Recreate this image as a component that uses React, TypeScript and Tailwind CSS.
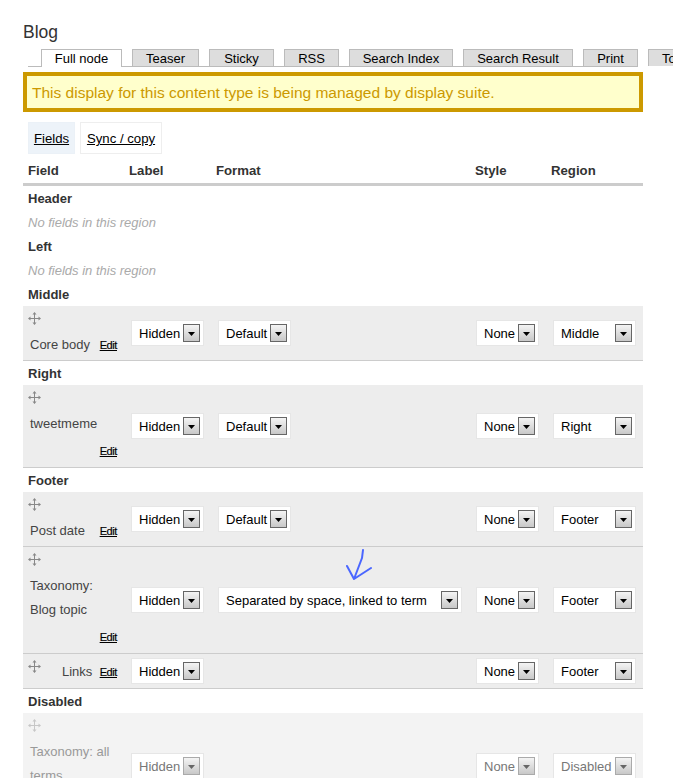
const FONT = "font-['Liberation_Sans',Arial,sans-serif]";

const TABS = [
  { label: 'Teaser', width: 'w-[67px]' },
  { label: 'Sticky', width: 'w-[65px]' },
  { label: 'RSS', width: 'w-[55px]' },
  { label: 'Search Index', width: 'w-[104px]' },
  { label: 'Search Result', width: 'w-[110px]' },
  { label: 'Print', width: 'w-[55px]' },
];

function DragIcon({ disabled }: { disabled?: boolean }) {
  return (
    <svg width="13" height="13" viewBox="0 0 13 13" className={disabled ? 'block shrink-0 opacity-40' : 'block shrink-0'}>
      <path d="M6.5 1.5v10M1.5 6.5h10" stroke="#888" strokeWidth="1" fill="none" />
      <path d="M6.5 0l2 2.5h-4zM6.5 13l2-2.5h-4zM0 6.5l2.5-2v4zM13 6.5l-2.5-2v4z" fill="#888" />
    </svg>
  );
}

function Select({ value, width, disabled }: { value: string; width: string; disabled?: boolean }) {
  return (
    <div className={`flex h-[26px] items-center justify-between border border-[#e6e6e6] bg-white pl-[7px] pr-[3px] text-[13px] ${width} ${disabled ? 'text-[#777]' : 'text-black'}`}>
      <span className="pt-[2px]">{value}</span>
      <span className={`flex h-[18px] w-[17px] items-center justify-center border bg-gradient-to-b from-[#f4f4f4] to-[#c8c8c8] ${disabled ? 'border-[#aaa]' : 'border-[#666]'}`}>
        <svg width="7" height="4" viewBox="0 0 7 4" className="mt-[1px]">
          <path d="M0 0h7L3.5 4z" fill={disabled ? '#666' : '#000'} />
        </svg>
      </span>
    </div>
  );
}

function EditLink() {
  return <a className="text-[11px] tracking-[-0.4px] text-black underline [-webkit-text-stroke:0.2px_black]">Edit</a>;
}

type RowProps = {
  lines: string[];
  height: string;
  format?: string;
  formatWide?: boolean;
  region: string;
  editBelow?: boolean;
  inline?: boolean;
  disabled?: boolean;
  children?: React.ReactNode;
};

function Row({ lines, height, format, formatWide, region, editBelow, inline, disabled, children }: RowProps) {
  return (
    <div className={`relative flex items-center border-b border-[#ccc] ${height} ${disabled ? 'bg-[#f3f3f3] text-[#999]' : 'bg-[#ededed] text-[#444]'}`}>
      {inline ? (
        <div className="flex w-[108px] items-start self-start pl-[5px] pr-[14px] pt-[6px] text-[13px] leading-[24px]">
          <DragIcon />
          <span className="ml-[21px] mr-auto">{lines[0]}</span>
          <EditLink />
        </div>
      ) : (
        <div className="flex w-[108px] flex-col self-start pl-[5px] pr-[14px] pt-[6px] text-[13px]">
          <DragIcon disabled={disabled} />
          <div className="mt-[8px] pl-[2px] leading-[24px]">
            {lines.map((line, i) => (
              <div key={line} className="flex justify-between">
                <span>{line}</span>
                {!editBelow && !disabled && i === lines.length - 1 && <EditLink />}
              </div>
            ))}
          </div>
          {editBelow && (
            <div className="mt-[3px] text-right leading-[24px]">
              <EditLink />
            </div>
          )}
        </div>
      )}
      <div className="w-[87px]">
        <Select value="Hidden" width="w-[73px]" disabled={disabled} />
      </div>
      <div className="w-[258px]">
        {format && <Select value={format} width={formatWide ? 'w-[244px]' : 'w-[73px]'} />}
      </div>
      <div className="w-[77px]">
        <Select value="None" width="w-[63px]" disabled={disabled} />
      </div>
      <Select value={region} width="w-[83px]" disabled={disabled} />
      {children}
    </div>
  );
}

function RegionTitle({ title }: { title: string }) {
  return <div className="flex h-[24px] items-center pl-[5px] pt-[2px] text-[13px] font-bold text-[#333]">{title}</div>;
}

function EmptyRegion() {
  return <div className="flex h-[24px] items-center pl-[5px] pt-[2px] text-[13px] italic text-[#aaa]">No fields in this region</div>;
}

export default function App() {
  return (
    <div className={`h-[778px] w-[673px] overflow-hidden bg-white ${FONT}`}>
      <div className="ml-[23px] w-[620px]">
        <h1 className="flex h-[49px] items-end pb-[7px] text-[17.5px] leading-[20px] font-normal text-[#333]">Blog</h1>

        {/* Tabs */}
        <div className="ml-[5px] flex h-[18px] w-[610px] border-b border-[#bbb] pl-[13px] text-[13px]">
          <div className="z-10 flex h-[18px] w-[81px] shrink-0 items-center justify-center border border-b-0 border-[#bbb] bg-white pt-[1px]">Full node</div>
          {TABS.map((tab) => (
            <div key={tab.label} className={`ml-[10px] flex h-[17px] shrink-0 items-center justify-center border border-b-0 border-[#bbb] bg-[#ddd] pt-[1px] ${tab.width}`}>
              {tab.label}
            </div>
          ))}
          <div className="ml-[10px] flex h-[17px] w-[50px] shrink-0 items-center border border-b-0 border-[#bbb] bg-[#ddd] pl-[13px] pt-[1px]">To</div>
        </div>

        <div className="mt-[5px] flex h-[40px] items-center border-4 border-[#c90] bg-[#ffc] pl-[5px] pt-[1px] text-[15.5px] text-[#c90]">
          This display for this content type is being managed by display suite.
        </div>

        <div className="ml-[5px] mt-[10px] flex h-[32px] gap-[5px] text-[13.2px] text-black">
          <a className="flex w-[47px] items-center justify-center border border-[#ebf1f7] bg-[#edf3f9] pt-[2px] underline">Fields</a>
          <a className="flex w-[82px] items-center justify-center border border-[#eee] bg-white pt-[2px] underline">Sync / copy</a>
        </div>

        {/* Table head */}
        <div className="flex h-[32px] border-b-[3px] border-[#ccc] pt-[9px] text-[13.2px] leading-[16px] font-bold text-[#333]">
          <div className="w-[106px] pl-[5px]">Field</div>
          <div className="w-[87px]">Label</div>
          <div className="w-[259px]">Format</div>
          <div className="w-[76px]">Style</div>
          <div>Region</div>
        </div>

        <RegionTitle title="Header" />
        <EmptyRegion />
        <RegionTitle title="Left" />
        <EmptyRegion />
        <RegionTitle title="Middle" />
        <Row lines={['Core body']} height="h-[55px]" format="Default" region="Middle" />
        <RegionTitle title="Right" />
        <Row lines={['tweetmeme']} height="h-[83px]" format="Default" region="Right" editBelow />
        <RegionTitle title="Footer" />
        <Row lines={['Post date']} height="h-[55px]" format="Default" region="Footer" />
        <Row lines={['Taxonomy:', 'Blog topic']} height="h-[107px]" format="Separated by space, linked to term" formatWide region="Footer" editBelow>
          {/* hand-drawn arrow on the screenshot */}
          <svg width="30" height="34" viewBox="0 0 30 34" className="absolute left-[323px] top-[2px]">
            <path d="M17 1L16 9L8 30M1 17L8 30L25 19" stroke="#4a66ff" strokeWidth="2" fill="none" strokeLinecap="round" strokeLinejoin="round" />
          </svg>
        </Row>
        <Row lines={['Links']} height="h-[35px]" region="Footer" inline />
        <RegionTitle title="Disabled" />
        <Row lines={['Taxonomy: all', 'terms']} height="h-[107px]" region="Disabled" disabled />
      </div>
    </div>
  );
}
